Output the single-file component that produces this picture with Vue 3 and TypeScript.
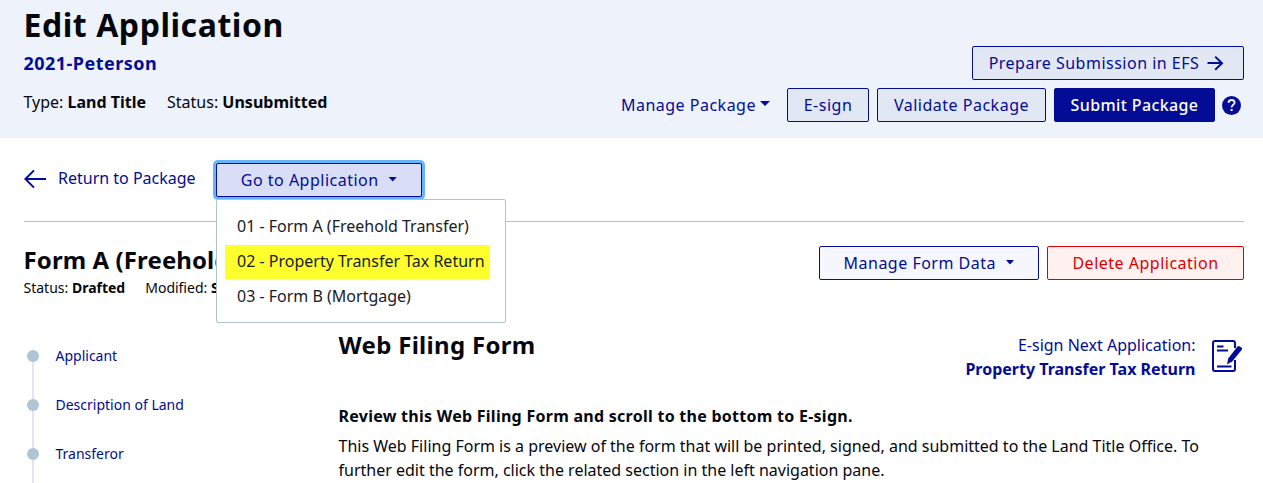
<script setup lang="ts">
import { ref } from 'vue'

interface MenuItem {
  label: string
  highlighted?: boolean
}

const applications: MenuItem[] = [
  { label: '01 - Form A (Freehold Transfer)' },
  { label: '02 - Property Transfer Tax Return', highlighted: true },
  { label: '03 - Form B (Mortgage)' },
]
const steps: string[] = ['Applicant', 'Description of Land', 'Transferor']
const menuOpen = ref(true)
</script>

<template>
  <div class="page">
    <header class="masthead">
      <div class="package">
        <h1>Edit Application</h1>
        <div class="package-name">2021-Peterson</div>
        <div class="meta">
          <span class="meta-type">Type: <b>Land Title</b></span>
          <span class="meta-status">Status: <b>Unsubmitted</b></span>
        </div>
      </div>
      <div class="actions">
        <button class="btn soft prepare">
          <span>Prepare Submission in EFS</span>
          <svg width="17" height="16" viewBox="0 0 17 16" fill="none" stroke="currentColor" stroke-width="2">
            <path d="M0.5 8H15M8.2 1.6L15 8.2L8.2 14.8" />
          </svg>
        </button>
        <div class="action-row">
          <button class="link-btn">
            <span>Manage Package</span><i class="caret"></i>
          </button>
          <button class="btn soft esign">E-sign</button>
          <button class="btn soft validate">Validate Package</button>
          <button class="btn primary submit">Submit Package</button>
          <svg class="help" width="19" height="19" viewBox="0 0 19 19">
            <circle cx="9.5" cy="9.5" r="9.5" fill="#030c94" />
            <path d="M6.5 6.9C6.6 5 7.8 4 9.6 4C11.4 4 12.6 5 12.6 6.6C12.6 8.7 9.6 8.9 9.6 11.4" fill="none" stroke="#eef2fa" stroke-width="1.8" />
            <rect x="8.6" y="13" width="2" height="2" fill="#eef2fa" />
          </svg>
        </div>
      </div>
    </header>

    <nav class="toolbar">
      <a class="back">
        <svg width="23" height="20" viewBox="0 0 23 20" fill="none" stroke="currentColor" stroke-width="2">
          <path d="M22 10H1.6M10 1.4L1.4 10L10 18.6" />
        </svg>
        <span>Return to Package</span>
      </a>
      <div class="dropdown">
        <button class="btn goto" @click="menuOpen = !menuOpen">
          <span>Go to Application</span><i class="caret compact"></i>
        </button>
        <ul v-if="menuOpen" class="menu">
          <li v-for="item in applications" :key="item.label" :class="{ highlighted: item.highlighted }">
            {{ item.label }}
          </li>
        </ul>
      </div>
    </nav>

    <section class="form-head">
      <div class="form-title">
        <h2>Form A (Freehold Transfer)</h2>
        <div class="meta small">
          <span>Status: <b>Drafted</b></span>
          <span>Modified: <b>September 20, 2021</b></span>
        </div>
      </div>
      <div class="form-actions">
        <button class="btn pale manage"><span>Manage Form Data</span><i class="caret compact"></i></button>
        <button class="btn danger">Delete Application</button>
      </div>
    </section>

    <div class="body">
      <ol class="steps">
        <li v-for="step in steps" :key="step"><i class="dot"></i><span>{{ step }}</span></li>
      </ol>
      <main class="content">
        <div class="content-head">
          <h2>Web Filing Form</h2>
          <a class="next">
            <span class="next-text">
              <span class="next-label">E-sign Next Application:</span>
              <b>Property Transfer Tax Return</b>
            </span>
            <svg width="31" height="33" viewBox="0 0 31 33" fill="none" stroke="currentColor" stroke-width="2">
              <path d="M23 8V3Q23 1 21 1H3Q1 1 1 3V29Q1 31 3 31H21Q23 31 23 29V20" />
              <path d="M5 6.5H11.5M5 10.5H16M5 26.5H19.5" stroke-width="1.8" />
              <path d="M25.4 6.6Q26.5 5.6 27.8 6.4L29.5 7.6Q30.6 8.6 29.8 9.7L20.4 21.3L15 24.4L16.2 18.4Z" fill="currentColor" stroke="none" />
            </svg>
          </a>
        </div>
        <p class="review">Review this Web Filing Form and scroll to the bottom to E-sign.</p>
        <p class="intro">
          This Web Filing Form is a preview of the form that will be printed, signed, and submitted to the Land Title Office. To<br />
          further edit the form, click the related section in the left navigation pane.
        </p>
      </main>
    </div>
  </div>
</template>

<style>
html,
body {
  margin: 0;
  background: #ffffff;
  overflow: hidden;
}
</style>

<style scoped>
.page {
  height: 483px;
  overflow: hidden;
  color: #05070d;
  font: 16px/24px 'Noto Sans', sans-serif;
  white-space: nowrap;
}
.page * {
  box-sizing: border-box;
}
h1,
h2,
p,
ul,
ol {
  margin: 0;
  padding: 0;
  list-style: none;
}
svg {
  display: block;
  flex: none;
}
b,
h1,
h2 {
  font-weight: 700;
}
.masthead {
  display: flex;
  justify-content: space-between;
  height: 138px;
  padding: 0 19px 0 23.5px;
  background: #eef2fa;
}
h1 {
  font-size: 32px;
  line-height: 49px;
  letter-spacing: 0.55px;
}
h2 {
  font-size: 24px;
  line-height: 33px;
  letter-spacing: 0.3px;
}
.form-title h2 {
  letter-spacing: 0.1px;
}
.package-name {
  font-size: 18px;
  line-height: 28px;
  font-weight: 700;
  letter-spacing: 0.48px;
  color: #030c94;
}
.meta {
  display: flex;
  gap: 21px;
  margin-top: 13px;
}
.meta.small {
  gap: 20px;
  margin-top: 0;
  font-size: 14px;
  line-height: 24px;
}
.actions {
  display: flex;
  flex-direction: column;
  align-items: flex-end;
  gap: 8px;
  padding-top: 46px;
}
.action-row {
  display: flex;
  align-items: center;
  gap: 8px;
}
button {
  margin: 0;
  padding: 0;
  font: inherit;
  letter-spacing: 0.5px;
  color: #030c94;
  background: none;
  border: 0;
}
.btn {
  display: flex;
  align-items: center;
  justify-content: center;
  height: 34px;
  border: 1px solid #030c94;
  border-radius: 2px;
}
.soft {
  background: #e2e8f3;
}
.primary {
  background: #030c94;
  color: #ffffff;
  font-weight: 500;
  letter-spacing: 0.38px;
}
.prepare {
  width: 272px;
  gap: 8px;
  padding-right: 3px;
}
.esign {
  width: 82px;
}
.validate {
  width: 169px;
}
.submit {
  width: 161px;
}
.link-btn {
  display: flex;
  align-items: center;
  gap: 4px;
  margin-right: 9px;
}
.caret {
  width: 0;
  height: 0;
  margin-top: -3px;
  border: 5px solid transparent;
  border-top-color: currentColor;
  border-bottom: 0;
}
.caret.compact {
  width: 9px;
  height: 5px;
  margin-top: -2px;
  border: 0;
  background: currentColor;
  clip-path: polygon(0 0, 100% 0, 50% 100%);
}
.help {
  margin: 1px 3px 0 -1px;
}
.toolbar {
  display: flex;
  height: 84px;
  margin: 0 19px 0 24px;
  padding-top: 25px;
  border-bottom: 1px solid #afc3d3;
}
.back {
  display: flex;
  align-items: center;
  gap: 11px;
  width: 192px;
  height: 32px;
  color: #030c94;
}
.back span {
  margin-bottom: 2px;
}
.dropdown {
  position: relative;
}
.goto {
  width: 206px;
  gap: 9.5px;
  background: #d9ddf5;
  box-shadow: 0 0 0 3px #64b5fb;
}
.menu {
  position: absolute;
  z-index: 2;
  top: 36px;
  left: 0;
  width: 290px;
  height: 124px;
  padding: 10px 8px;
  background: #ffffff;
  border: 1px solid #afc3d3;
  border-radius: 2px;
  color: #171b26;
}
.menu li {
  width: 265px;
  height: 34px;
  margin-bottom: 1px;
  padding: 4px 12px;
}
.menu .highlighted {
  background: #ffff2e;
}
.form-head {
  display: flex;
  justify-content: space-between;
  height: 106px;
  margin: 0 19px 0 23.5px;
  padding-top: 21px;
}
.form-actions {
  display: flex;
  gap: 8px;
  padding-top: 3px;
}
.pale {
  background: #f5f7fd;
}
.manage {
  width: 220px;
  gap: 9.5px;
}
.danger {
  width: 197px;
  color: #dc0000;
  background: #fff1ef;
  border-color: #dc0000;
}
.body {
  display: flex;
  margin: 0 19px 0 24px;
}
.steps {
  width: 314.5px;
  padding-top: 16px;
  font-size: 14px;
  line-height: 24px;
  color: #030c94;
}
.steps li {
  display: flex;
  align-items: flex-start;
  gap: 16.5px;
  height: 49px;
  padding-left: 3px;
  background: linear-gradient(#dde7f3, #dde7f3) 8px 12px / 2px 49px no-repeat;
}
.steps li + li {
  background-position: 8px 0;
}
.dot {
  width: 12px;
  height: 12px;
  margin-top: 6px;
  border-radius: 50%;
  background: #afc5d6;
}
.content {
  flex: 1;
}
.content-head {
  display: flex;
  justify-content: space-between;
  height: 76px;
}
.next {
  display: flex;
  gap: 16.5px;
  padding-top: 5px;
  color: #030c94;
}
.next svg {
  margin: 7px 1px 0 0;
}
.next-text {
  display: flex;
  flex-direction: column;
  align-items: flex-end;
}
.review {
  font-weight: 700;
  letter-spacing: 0.265px;
  margin-bottom: 6px;
}
</style>
